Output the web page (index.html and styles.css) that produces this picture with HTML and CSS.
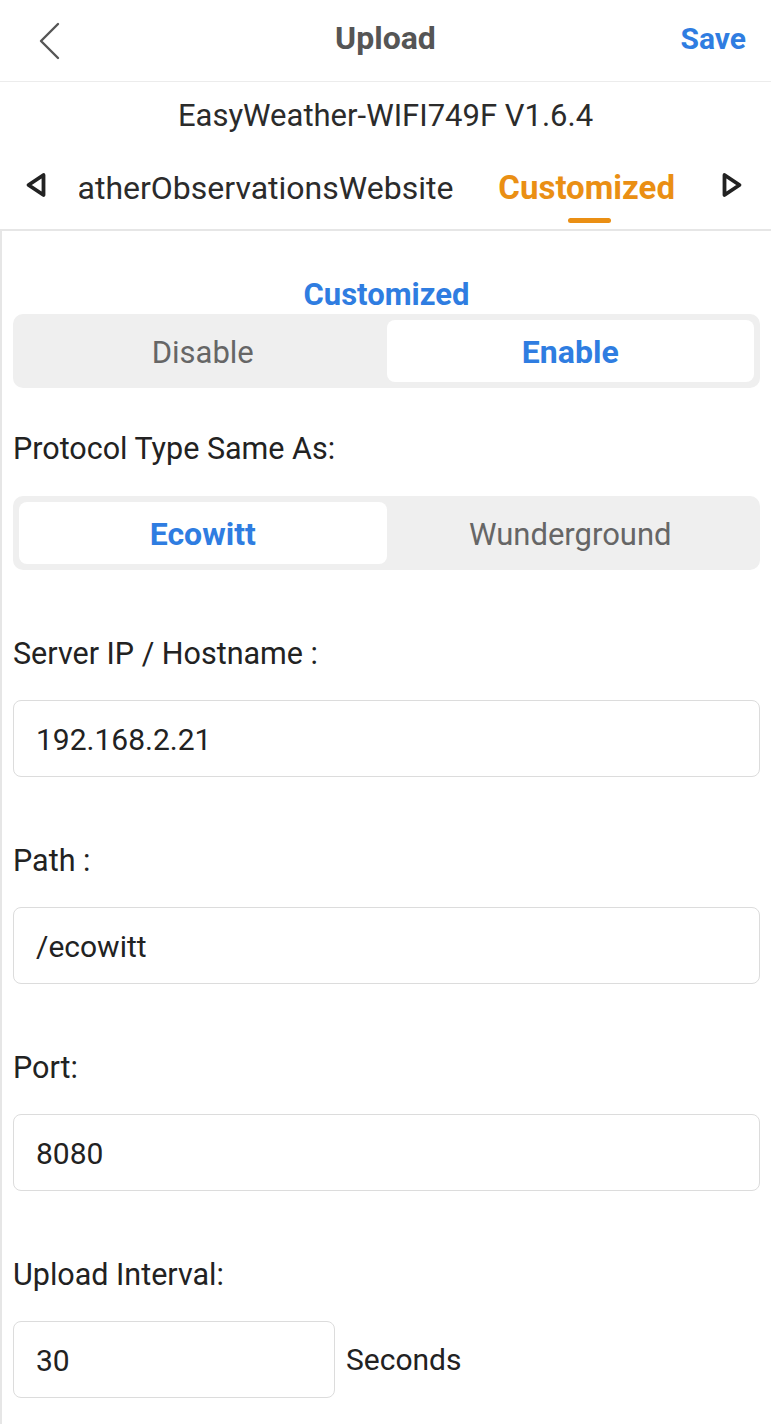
FILE: index.html
```html
<!DOCTYPE html>
<html>
<head>
<meta charset="utf-8">
<link rel="stylesheet" href="styles.css">
</head>
<body>
<div class="app">
  <header class="topbar">
    <span class="back">
      <svg width="24" height="40" viewBox="0 0 24 40"><path d="M20 3 L3 20 L20 37" fill="none" stroke="#555" stroke-width="2.4" stroke-linecap="round" stroke-linejoin="round"/></svg>
    </span>
    <h1 class="title">Upload</h1>
    <span class="save">Save</span>
  </header>

  <div class="device">EasyWeather-WIFI749F V1.6.4</div>

  <nav class="tabs">
    <span class="arrow arrow-left">
      <svg width="22" height="26" viewBox="0 0 22 26"><path d="M18.5 3 L3.5 13 L18.5 23 Z" fill="none" stroke="#222" stroke-width="3.8" stroke-linejoin="round"/></svg>
    </span>
    <div class="strip">
      <div class="tab">WeatherObservationsWebsite</div>
      <div class="tab active">Customized<span class="bar"></span></div>
    </div>
    <span class="arrow arrow-right">
      <svg width="22" height="26" viewBox="0 0 22 26"><path d="M3.5 3 L18.5 13 L3.5 23 Z" fill="none" stroke="#222" stroke-width="3.8" stroke-linejoin="round"/></svg>
    </span>
  </nav>

  <main class="content">
    <div class="section-title">Customized</div>
    <div class="segment">
      <div class="seg-item">Disable</div>
      <div class="seg-item on">Enable</div>
    </div>

    <div class="label first">Protocol Type Same As:</div>
    <div class="segment">
      <div class="seg-item on">Ecowitt</div>
      <div class="seg-item">Wunderground</div>
    </div>

    <div class="label">Server IP / Hostname :</div>
    <div class="input">192.168.2.21</div>

    <div class="label">Path :</div>
    <div class="input">/ecowitt</div>

    <div class="label">Port:</div>
    <div class="input">8080</div>

    <div class="label">Upload Interval:</div>
    <div class="interval">
      <div class="input short">30</div>
      <span class="unit">Seconds</span>
    </div>
  </main>
</div>
</body>
</html>
```
FILE: styles.css
```css
* { box-sizing: border-box; }
html, body { margin: 0; padding: 0; background: #fff; }
body {
  font-family: Roboto, "Liberation Sans", sans-serif;
  color: #222;
  font-size: 30.5px;
}
.app { width: 771px; min-height: 1424px; display: flex; flex-direction: column; }

.topbar {
  height: 82px;
  display: grid;
  grid-template-columns: 1fr auto 1fr;
  align-items: center;
  padding: 0 25px;
  border-bottom: 1.5px solid #ececec;
}
.back { display: flex; align-items: center; margin-left: 13px; }
.title {
  margin: 0;
  font-size: 32px;
  font-weight: 700;
  color: #555;
  margin-top: -6px;
}
.save {
  justify-self: end;
  color: #2f7de1;
  font-weight: 700;
  font-size: 30px;
  margin-top: -5px;
}

.device {
  height: 66px;
  display: flex;
  align-items: center;
  justify-content: center;
  color: #2b2b2b;
  font-size: 31px;
}

.tabs {
  height: 83px;
  display: flex;
  border-bottom: 2px solid #e6e6e6;
}
.arrow { align-self: flex-start; margin-top: 24px; display: flex; }
.arrow-left { margin-left: 25px; margin-right: 32px; }
.arrow-right { margin-left: 21px; margin-right: 28px; }
.strip {
  flex: 1;
  overflow: hidden;
  display: flex;
  justify-content: flex-end;
  gap: 45px;
  padding-right: 25px;
}
.tab {
  flex: none;
  white-space: nowrap;
  padding-top: 21px;
  line-height: 38px;
  color: #2b2b2b;
  font-size: 32px;
  display: flex;
  flex-direction: column;
  align-items: center;
}
.tab.active { color: #ea8f14; font-weight: 700; font-size: 33px; }
.bar {
  margin-top: 11px;
  margin-left: 6px;
  width: 43px;
  height: 5px;
  border-radius: 3px;
  background: #ea8f14;
}

.content {
  flex: 1;
  border-left: 2px solid #e6e6e6;
  padding: 45px 11px 30px 11px;
  display: flex;
  flex-direction: column;
}
.section-title {
  text-align: center;
  color: #2f7de1;
  font-weight: 700;
  line-height: 38px;
  font-size: 31px;
}
.segment {
  height: 74px;
  background: #efefef;
  border-radius: 10px;
  padding: 6px;
  display: grid;
  grid-template-columns: 1fr 1fr;
}
.seg-item {
  display: flex;
  align-items: center;
  justify-content: center;
  color: #666;
  border-radius: 8px;
  font-size: 31px;
  padding-top: 2px;
}
.seg-item.on { background: #fff; color: #2f7de1; font-weight: 700; font-size: 32px; }

.label {
  margin-top: 64px;
  line-height: 40px;
  color: #222;
  margin-bottom: 26px;
}
.label.first { margin-top: 41px; margin-bottom: 27px; }

.input {
  height: 77px;
  border: 1.5px solid #dcdcdc;
  border-radius: 8px;
  padding-left: 22px;
  padding-top: 2px;
  display: flex;
  align-items: center;
  color: #222;
  font-size: 30px;
}
.interval { display: flex; align-items: center; gap: 11px; }
.input.short { width: 322px; }
.unit { color: #222; font-size: 30px; }
```
